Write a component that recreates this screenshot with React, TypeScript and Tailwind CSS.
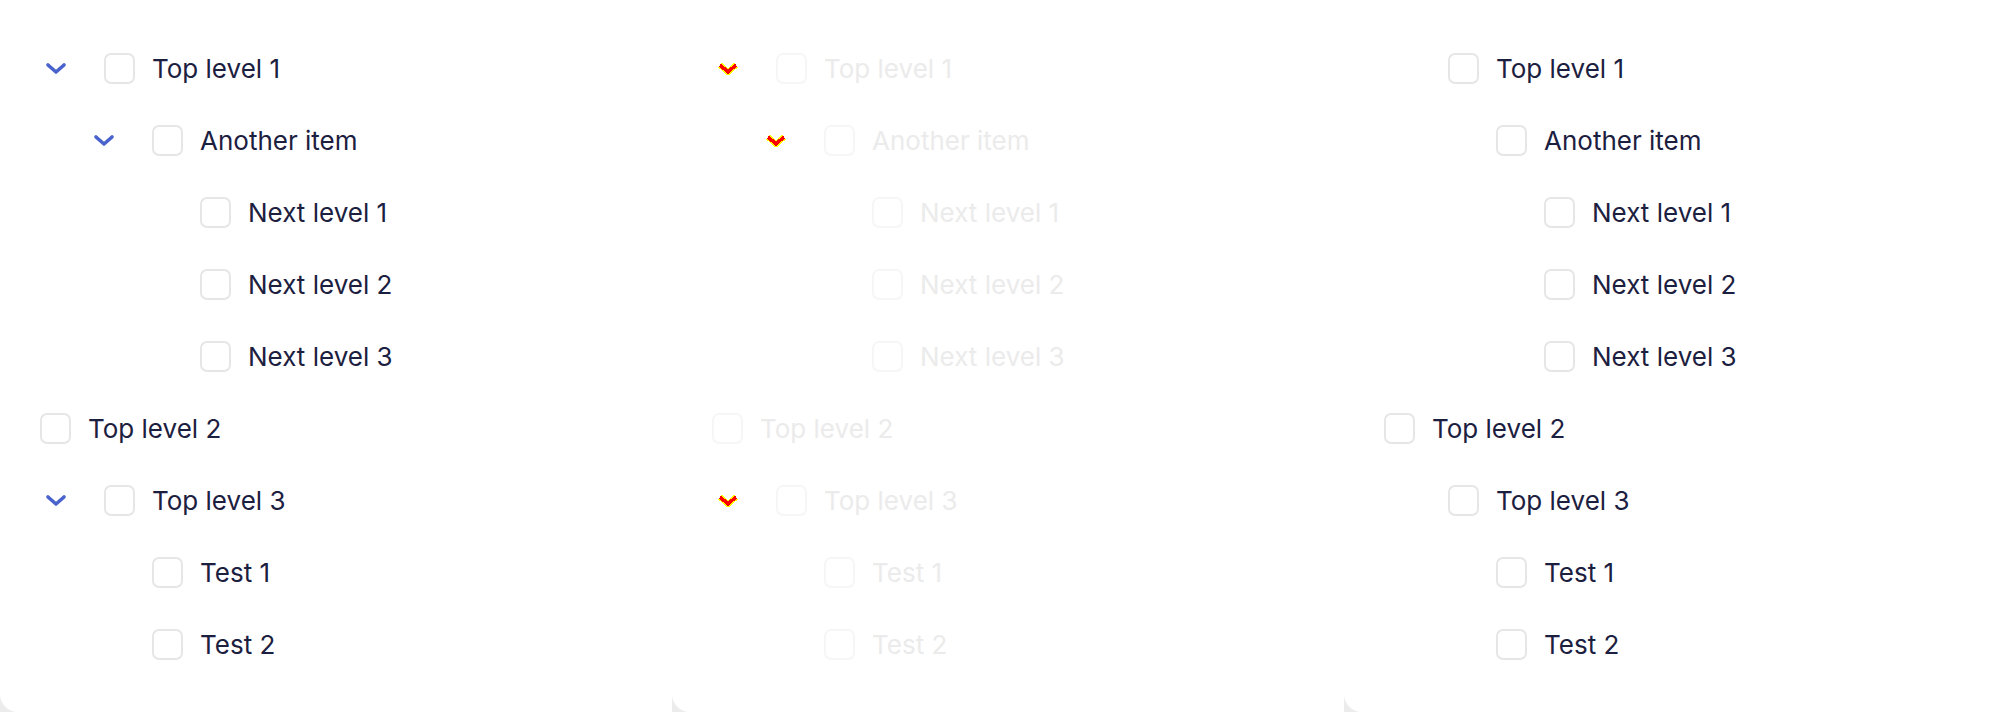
type Variant = 'normal' | 'faded' | 'plain'

type Item = {
  label: string
  indent: string
  lead: 'chevron' | 'spacer' | 'none'
}

const items: Item[] = [
  { label: 'Top level 1', indent: 'pl-[40px]', lead: 'chevron' },
  { label: 'Another item', indent: 'pl-[88px]', lead: 'chevron' },
  { label: 'Next level 1', indent: 'pl-[136px]', lead: 'spacer' },
  { label: 'Next level 2', indent: 'pl-[136px]', lead: 'spacer' },
  { label: 'Next level 3', indent: 'pl-[136px]', lead: 'spacer' },
  { label: 'Top level 2', indent: 'pl-[40px]', lead: 'none' },
  { label: 'Top level 3', indent: 'pl-[40px]', lead: 'chevron' },
  { label: 'Test 1', indent: 'pl-[88px]', lead: 'spacer' },
  { label: 'Test 2', indent: 'pl-[88px]', lead: 'spacer' },
]

function Chevron({ variant }: { variant: Variant }) {
  if (variant === 'plain') return null
  if (variant === 'faded') {
    return (
      <svg width="22" height="13" viewBox="0 0 22 13" shapeRendering="crispEdges" className="ml-[5px]">
        <path d="M3 3 L11 10 L19 3" fill="none" stroke="#ffff00" strokeWidth="6" strokeLinejoin="miter" />
        <path d="M3 3 L11 10 L19 3" fill="none" stroke="#ff0000" strokeWidth="3.5" strokeLinejoin="miter" />
      </svg>
    )
  }
  return (
    <svg width="22" height="13" viewBox="0 0 22 13" className="ml-[5px]">
      <path
        d="M3 3 L11 10 L19 3"
        fill="none"
        stroke="#4a63cc"
        strokeWidth="3.6"
        strokeLinecap="round"
        strokeLinejoin="round"
      />
    </svg>
  )
}

function Row({ item, variant }: { item: Item; variant: Variant }) {
  const box =
    variant === 'faded' ? 'border-[#f6f6f6]' : 'border-[#e6e6e6]'
  const text = variant === 'faded' ? 'text-[#ebebeb]' : 'text-[#1c2040]'
  return (
    <div className={`flex items-center h-[72px] ${item.indent}`}>
      {item.lead !== 'none' && (
        <div className="w-[64px] flex items-center shrink-0">
          {item.lead === 'chevron' && <Chevron variant={variant} />}
        </div>
      )}
      <div className={`w-[31px] h-[31px] rounded-[7px] border-2 bg-white shrink-0 ${box}`} />
      <span className={`ml-[17px] mt-[2px] text-[26px] leading-none whitespace-nowrap ${text}`}>
        {item.label}
      </span>
    </div>
  )
}

function Panel({ variant }: { variant: Variant }) {
  return (
    <div className="w-[672px] h-[712px] bg-white rounded-bl-[18px] pt-[32px] shrink-0">
      {items.map((it) => (
        <Row key={it.label} item={it} variant={variant} />
      ))}
    </div>
  )
}

export default function App() {
  return (
    <div
      className="w-[2016px] h-[712px] flex bg-[#ececec] overflow-hidden"
      style={{ fontFamily: 'Inter, "Noto Sans", sans-serif' }}
    >
      <Panel variant="normal" />
      <Panel variant="faded" />
      <Panel variant="plain" />
    </div>
  )
}
